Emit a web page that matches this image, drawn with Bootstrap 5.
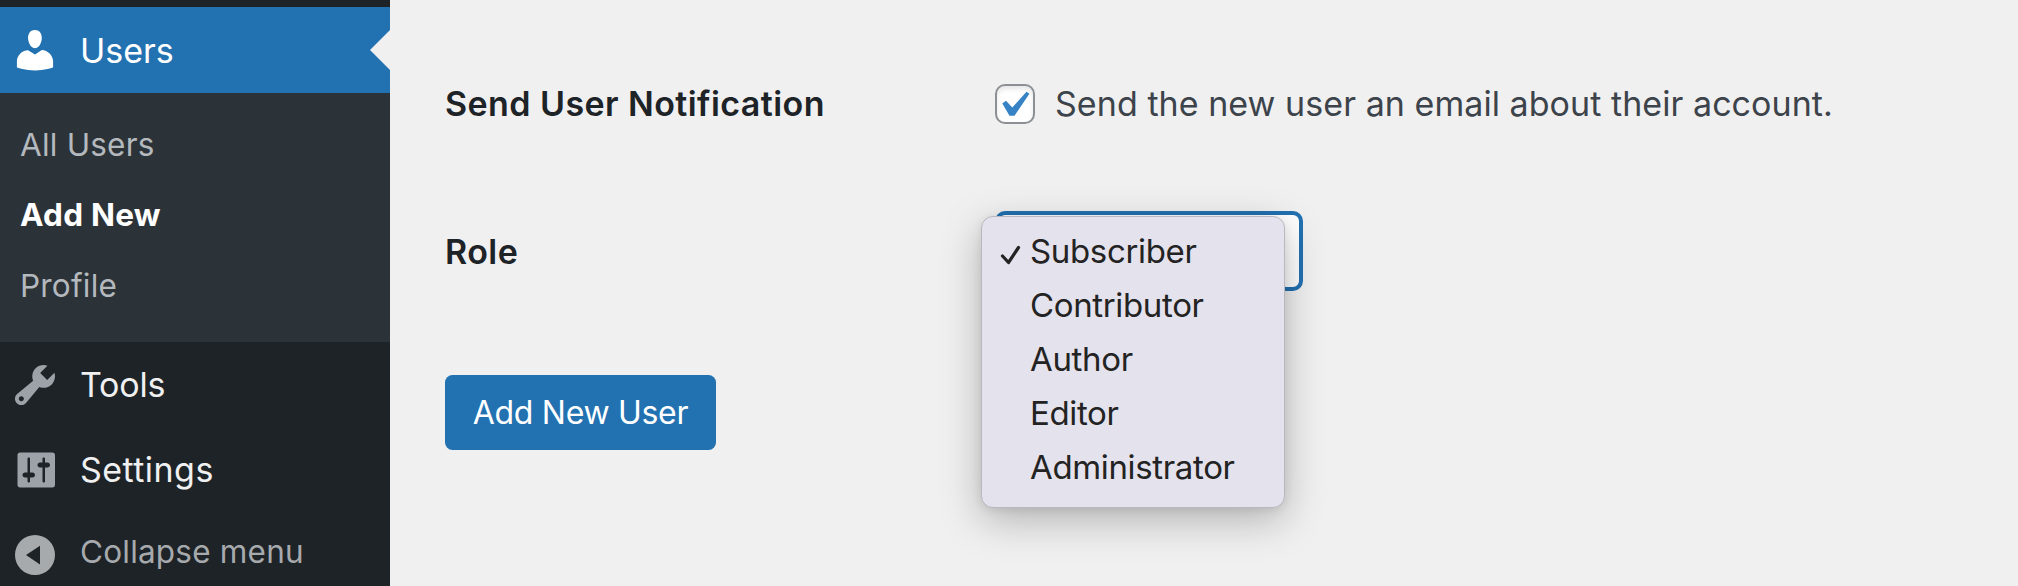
<!DOCTYPE html>
<html lang="en">
<head>
<meta charset="utf-8">
<title>Add New User</title>
<meta name="viewport" content="width=device-width, initial-scale=1">
<link rel="stylesheet" href="https://cdn.jsdelivr.net/npm/bootstrap@5.3.0/dist/css/bootstrap.min.css">
<style>
  body { font-family: Inter, "Liberation Sans", sans-serif; font-size: 34px; line-height: 1; background: #f0f0f1; color: #3c434a; overflow: hidden; }
  .screen { height: 586px; }
  .side-menu { width: 390px; background: #1d2327; padding-top: 7px; }
  .side-menu > * { flex-shrink: 0; }
  .side-menu .nav-link { color: #f0f0f1; padding: 0 0 0 10px; height: 85px; white-space: nowrap; }
  .side-menu .nav-link svg { width: 50px; height: 50px; margin-right: 20px; fill: #9ca2a7; flex: none; }
  .side-menu .nav-link.current { height: 86px; background: #2271b1; color: #fff; position: relative; }
  .side-menu .nav-link.current svg { fill: #fff; }
  .side-menu .nav-link.current span { padding-top: 1px; }
  .side-menu .nav-link.current::after { content: ""; position: absolute; right: 0; top: 23px; border: 20px solid transparent; border-left: 0; border-right-color: #f0f0f1; }
  .side-menu .tools-link { letter-spacing: -.2px; }
  .side-menu .settings-link { letter-spacing: .45px; }
  .sub-menu { background: #2c3338; height: 249px; padding-top: 16px; font-size: 31.5px; letter-spacing: .2px; }
  .sub-menu .nav-link { height: 70.6px; padding-left: 20px; color: #b4b9be; }
  .sub-menu .nav-link.chosen { color: #fff; font-weight: 700; letter-spacing: .25px; }
  .side-menu .nav-link.collapse-link { height: 80px; font-size: 31.5px; color: #a7aaad; letter-spacing: .2px; }
  .side-menu .nav-link.collapse-link svg { fill: #a7aaad; margin-top: 5px; }
  .form-area { padding: 64px 0 0 55px; }
  .field-name { width: 550px; font-weight: 600; color: #1d2327; letter-spacing: .43px; }
  .check-line { height: 80px; }
  .check-line label { letter-spacing: .055px; }
  .role-line { height: 81px; margin-top: 66px; }
  .role-line .field-name { padding-top: 3px; }
  .form-check-input.notify { width: 40px; height: 40px; margin: 0 20px 0 0; border: 2px solid #8c8f94; border-radius: 10px; background: #fff; box-shadow: inset 0 3px 5px rgba(0,0,0,.1); }
  .notify-box { position: relative; display: flex; }
  .notify-box svg { position: absolute; left: 0; top: 0; width: 40px; height: 40px; fill: #3582c4; pointer-events: none; }
  .role-box { width: 308px; height: 80px; border: 4px solid #2271b1; border-radius: 10px; background: #fff; }
  .dropdown-menu.role-list { display: block; left: -14px; top: 5px; width: 304px; height: 292px; padding: 9px 0 0; border: 1px solid #b9b8bf; border-radius: 12px; background: #e4e2ec; box-shadow: 0 12px 40px rgba(0,0,0,.26), 0 2px 10px rgba(0,0,0,.08); font-size: 33px; letter-spacing: -.35px; }
  .role-list .dropdown-item { height: 54px; padding: 0 0 2px 48px; color: #232323; line-height: 1; position: relative; }
  .role-list .dropdown-item svg { position: absolute; left: 17px; top: 17px; width: 24px; height: 24px; }
  .btn-add { margin-top: 84px; width: 271px; height: 75px; padding: 1px 0 0; background: #2271b1; color: #fff; border: 0; border-radius: 7.5px; font-size: 32px; line-height: 1; letter-spacing: -.3px; }
</style>
</head>
<body>
<div class="screen d-flex overflow-hidden">
  <nav class="side-menu nav flex-column flex-nowrap flex-shrink-0">
    <a class="nav-link current d-flex align-items-center" href="#">
      <svg viewBox="0 0 20 20"><path d="M10 9.25c-2.27 0-2.73-3.44-2.73-3.44C7 4.02 7.82 2 9.97 2c2.16 0 2.98 2.02 2.71 3.81 0 0-.41 3.44-2.68 3.44zm0 2.57L12.72 10c2.39 0 4.52 2.33 4.52 4.53v2.49s-3.65 1.13-7.24 1.13c-3.65 0-7.24-1.13-7.24-1.13v-2.49c0-2.25 1.94-4.48 4.47-4.48z"/></svg><span>Users</span></a>
    <div class="sub-menu">
      <a class="nav-link d-flex align-items-center" href="#">All Users</a>
      <a class="nav-link chosen d-flex align-items-center" href="#">Add New</a>
      <a class="nav-link d-flex align-items-center" href="#">Profile</a>
    </div>
    <a class="nav-link tools-link d-flex align-items-center" href="#">
      <svg viewBox="0 0 20 20"><path d="M16.68 9.77c-1.34 1.34-3.3 1.67-4.95.99l-5.41 6.52c-.99.99-2.59.99-3.58 0s-.99-2.59 0-3.57l6.52-5.42c-.68-1.65-.35-3.61.99-4.95 1.28-1.28 3.12-1.62 4.72-1.06l-2.89 2.89 2.82 2.82 2.86-2.87c.53 1.58.18 3.39-1.08 4.65zM3.81 16.21c.4.39 1.04.39 1.43 0 .4-.4.4-1.04 0-1.43-.39-.4-1.03-.4-1.43 0-.39.39-.39 1.03 0 1.43z"/></svg><span>Tools</span></a>
    <a class="nav-link settings-link d-flex align-items-center" href="#">
      <svg viewBox="0 0 20 20"><path d="M18 16V4c0-.55-.45-1-1-1H4c-.55 0-1 .45-1 1v12c0 .55.45 1 1 1h13c.55 0 1-.45 1-1zM8 11h1c.55 0 1 .45 1 1s-.45 1-1 1H8v1.5c0 .28-.22.5-.5.5s-.5-.22-.5-.5V13H6c-.55 0-1-.45-1-1s.45-1 1-1h1V5.5c0-.28.22-.5.5-.5s.5.22.5.5V11zm5-2h-1c-.55 0-1-.45-1-1s.45-1 1-1h1V5.5c0-.28.22-.5.5-.5s.5.22.5.5V7h1c.55 0 1 .45 1 1s-.45 1-1 1h-1v5.5c0 .28-.22.5-.5.5s-.5-.22-.5-.5V9z"/></svg><span>Settings</span></a>
    <a class="nav-link collapse-link d-flex align-items-center" href="#">
      <svg viewBox="0 0 20 20"><path fill-rule="evenodd" d="M10 2a8 8 0 1 0 0 16a8 8 0 1 0 0-16zM12 6.3v7.500L6.400 10z"/></svg><span>Collapse menu</span></a>
  </nav>
  <main class="form-area flex-grow-1">
    <div class="check-line d-flex align-items-center">
      <div class="field-name">Send User Notification</div>
      <label class="d-flex align-items-center" for="notify"><span class="notify-box"><input class="form-check-input notify" type="checkbox" id="notify"><svg viewBox="0 0 40 40"><path d="M7.300 19.500l3.700-2.700 6.300 6.700L31.500 7.700l2.900 2L19.500 31.800h-5z"/></svg></span><span>Send the new user an email about their account.</span></label>
    </div>
    <div class="role-line d-flex align-items-center">
      <div class="field-name">Role</div>
      <div class="dropdown">
        <div class="role-box"></div>
        <div class="dropdown-menu role-list">
          <a class="dropdown-item d-flex align-items-center" href="#"><svg viewBox="0 0 24 24" fill="none" stroke="#232323" stroke-width="3.2" stroke-linecap="round" stroke-linejoin="round"><path d="M3.500 13L9.500 19.500L19.500 4.500"/></svg>Subscriber</a>
          <a class="dropdown-item d-flex align-items-center" href="#">Contributor</a>
          <a class="dropdown-item d-flex align-items-center" href="#">Author</a>
          <a class="dropdown-item d-flex align-items-center" href="#">Editor</a>
          <a class="dropdown-item d-flex align-items-center" href="#">Administrator</a>
        </div>
      </div>
    </div>
    <button class="btn btn-add" type="button">Add New User</button>
  </main>
</div>
<script src="https://cdn.jsdelivr.net/npm/bootstrap@5.3.0/dist/js/bootstrap.bundle.min.js"></script>
</body>
</html>
